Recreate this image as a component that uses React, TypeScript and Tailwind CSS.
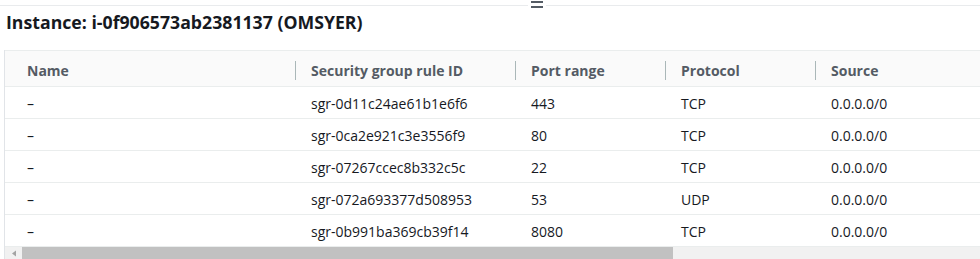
const rows = [
  { id: 'sgr-0d11c24ae61b1e6f6', port: '443', protocol: 'TCP', source: '0.0.0.0/0' },
  { id: 'sgr-0ca2e921c3e3556f9', port: '80', protocol: 'TCP', source: '0.0.0.0/0' },
  { id: 'sgr-07267ccec8b332c5c', port: '22', protocol: 'TCP', source: '0.0.0.0/0' },
  { id: 'sgr-072a693377d508953', port: '53', protocol: 'UDP', source: '0.0.0.0/0' },
  { id: 'sgr-0b991ba369cb39f14', port: '8080', protocol: 'TCP', source: '0.0.0.0/0' },
];

const columns = ['Name', 'Security group rule ID', 'Port range', 'Protocol', 'Source'];
const widths = ['w-[290px]', 'w-[220px]', 'w-[150px]', 'w-[150px]', 'flex-1'];

export default function App() {
  return (
    <div className="h-[259px] w-[980px] overflow-hidden bg-white font-['Open_Sans',sans-serif] text-[#16191f]">
      {/* resize handle line */}
      <div className="flex h-[10px] items-start">
        <div className="mt-[5px] h-px w-[528px] bg-[#e9ebed]" />
        <div className="flex w-[18px] flex-col items-center gap-[3px] pt-[1px]">
          <div className="h-[2px] w-[12px] bg-[#545b64]" />
          <div className="h-[2px] w-[12px] bg-[#545b64]" />
        </div>
        <div className="mt-[5px] h-px flex-1 bg-[#e9ebed]" />
      </div>

      <h2 className="h-[40px] pl-[6px] text-[17.7px] font-bold leading-[24px]">
        Instance: i-0f906573ab2381137 (OMSYER)
      </h2>

      <div className="ml-[4px] border-l border-[#e1e4e8]">
        <div className="flex h-[37px] items-center border-y border-[#eaeded] bg-[#fafafa] pt-[4px] text-[14px] font-bold text-[#545b64]">
          {columns.map((c, i) => (
            <div key={c} className={`${widths[i]} flex h-[19px] items-center`}>
              <div className={`h-full w-px ${i === 0 ? '' : 'bg-[#aab7b8]'}`} />
              <span className={i === 0 ? 'pl-[21px]' : 'pl-[15px]'}>{c}</span>
            </div>
          ))}
        </div>
        {rows.map((r) => (
          <div key={r.id} className="flex h-[32px] items-center border-b border-[#eaeded] pt-[1px] text-[14px] last:border-b-0">
            <div className="w-[290px] pl-[22px]">–</div>
            <div className="w-[220px] pl-[16px]">{r.id}</div>
            <div className="w-[150px] pl-[16px]">{r.port}</div>
            <div className="w-[150px] pl-[16px]">{r.protocol}</div>
            <div className="flex-1 pl-[16px]">{r.source}</div>
          </div>
        ))}
        {/* horizontal scrollbar */}
        <div className="flex h-[12px] bg-[#f1f1f1]">
          <div className="flex w-[17px] items-center justify-center">
            <svg width="6" height="7" viewBox="0 0 6 7">
              <path d="M5 0.5 L1 3.5 L5 6.5 Z" fill="#a3a3a3" />
            </svg>
          </div>
          <div className="w-[651px] bg-[#c1c1c1]" />
        </div>
      </div>
    </div>
  );
}
